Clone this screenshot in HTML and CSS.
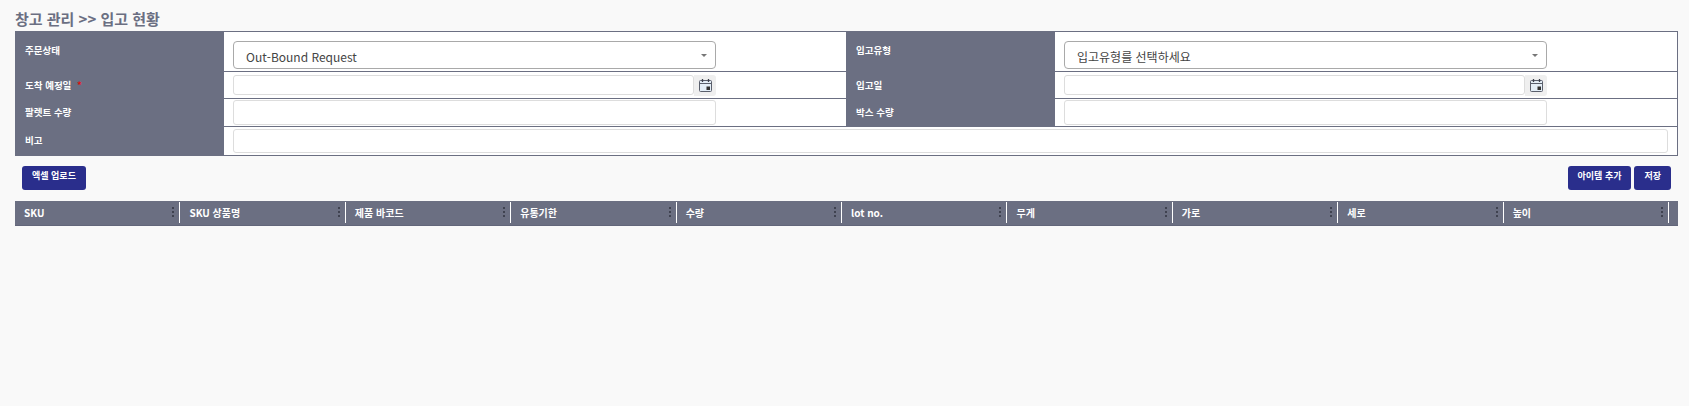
FILE: index.html
```html
<!DOCTYPE html>
<html lang="ko">
<head>
  <meta charset="UTF-8" />
  <title>입고 현황</title>
  <link rel="stylesheet" href="styles.css">
</head>
<body>
  <h1 class="page-title">창고 관리 &gt;&gt; 입고 현황</h1>

  <table class="form-table">
    <colgroup>
      <col class="col-label"><col class="col-field"><col class="col-label"><col class="col-field">
    </colgroup>
    <tr class="row-select">
      <th>주문상태</th>
      <td><div class="select"><span>Out-Bound Request</span><i class="caret"></i></div></td>
      <th>입고유형</th>
      <td><div class="select"><span>입고유형를 선택하세요</span><i class="caret"></i></div></td>
    </tr>
    <tr class="row-date">
      <th>도착 예정일 <em class="required">*</em></th>
      <td>
        <div class="date-group">
          <div class="date-input"></div>
          <div class="date-addon">
            <svg width="13" height="13" viewBox="0 0 13 13"><rect x="0.5" y="1.5" width="12" height="11" rx="1" fill="#e4eef7" stroke="#5a5f6c"/><path d="M1 4.5h11" stroke="#5a5f6c"/><path d="M3.5 0v3M9.5 0v3" stroke="#3c404c" stroke-width="1.3"/><rect x="7.5" y="7.5" width="3.5" height="3.5" fill="#333"/></svg>
          </div>
        </div>
      </td>
      <th>입고일</th>
      <td>
        <div class="date-group">
          <div class="date-input"></div>
          <div class="date-addon">
            <svg width="13" height="13" viewBox="0 0 13 13"><rect x="0.5" y="1.5" width="12" height="11" rx="1" fill="#e4eef7" stroke="#5a5f6c"/><path d="M1 4.5h11" stroke="#5a5f6c"/><path d="M3.5 0v3M9.5 0v3" stroke="#3c404c" stroke-width="1.3"/><rect x="7.5" y="7.5" width="3.5" height="3.5" fill="#333"/></svg>
          </div>
        </div>
      </td>
    </tr>
    <tr class="row-text">
      <th>팔렛트 수량</th>
      <td><div class="text-input"></div></td>
      <th>박스 수량</th>
      <td><div class="text-input"></div></td>
    </tr>
    <tr class="row-note">
      <th>비고</th>
      <td colspan="3"><div class="text-input note-input"></div></td>
    </tr>
  </table>

  <div class="toolbar">
    <button class="btn">엑셀 업로드</button>
    <div class="toolbar-right">
      <button class="btn">아이템 추가</button>
      <button class="btn">저장</button>
    </div>
  </div>

  <div class="grid-header">
    <div class="grid-cell"><span>SKU</span><i class="menu-dots"></i></div>
    <div class="grid-cell"><span>SKU 상품명</span><i class="menu-dots"></i></div>
    <div class="grid-cell"><span>제품 바코드</span><i class="menu-dots"></i></div>
    <div class="grid-cell"><span>유통기한</span><i class="menu-dots"></i></div>
    <div class="grid-cell"><span>수량</span><i class="menu-dots"></i></div>
    <div class="grid-cell"><span>lot no.</span><i class="menu-dots"></i></div>
    <div class="grid-cell"><span>무게</span><i class="menu-dots"></i></div>
    <div class="grid-cell"><span>가로</span><i class="menu-dots"></i></div>
    <div class="grid-cell"><span>세로</span><i class="menu-dots"></i></div>
    <div class="grid-cell"><span>높이</span><i class="menu-dots"></i></div>
  </div>
</body>
</html>
```

FILE: styles.css
```css
* {
  box-sizing: border-box;
}

html, body {
  height: 100%;
}

body {
  margin: 0;
  padding: 10px 11px 0 15px;
  background: #f9f9f9;
  font-family: "Noto Sans CJK KR", "Noto Sans", sans-serif;
  overflow: hidden;
}

.page-title {
  margin: 0;
  height: 21px;
  font-size: 15px;
  line-height: 18px;
  font-weight: 700;
  color: #6b6f82;
}

/* form table */
.form-table {
  width: 100%;
  border-collapse: collapse;
  table-layout: fixed;
  background: #fff;
}

.col-label {
  width: 208px;
}

.form-table th,
.form-table td {
  border: 1px solid #6b6f82;
  padding: 0;
}

.form-table th {
  background: #6b6f82;
  color: #fff;
  font-size: 9.5px;
  font-weight: 700;
  text-align: left;
  padding-left: 9px;
  vertical-align: middle;
}

.form-table td {
  padding-left: 9px;
}

.row-select { height: 40px; }
.row-date { height: 27px; }
.row-text { height: 28px; }
.row-note { height: 29px; }

.row-select th {
  padding-bottom: 3px;
}

.row-text th,
.row-note th {
  padding-bottom: 2px;
}

.select {
  display: flex;
  align-items: center;
  justify-content: space-between;
  width: 483px;
  height: 28px;
  margin-top: 7px;
  padding: 3px 8px 0 12px;
  background: #fff;
  border: 1px solid #a9a9a9;
  border-radius: 4px;
  font-size: 12px;
  color: #444;
}

.caret {
  width: 0;
  height: 0;
  border-left: 3px solid transparent;
  border-right: 3px solid transparent;
  border-top: 3px solid #777;
  margin-top: -3px;
}

.date-group {
  display: flex;
  width: 483px;
  height: 21px;
}

.date-input {
  flex: 1;
  height: 20px;
  background: #fff;
  border: 1px solid #ddd;
  border-radius: 3px;
}

.date-addon {
  display: flex;
  align-items: center;
  justify-content: center;
  width: 22px;
  background: #efefef;
  border-radius: 0 3px 3px 0;
}

.text-input {
  width: 483px;
  height: 25px;
  background: #fff;
  border: 1px solid #ddd;
  border-radius: 3px;
}

.note-input {
  width: 1435px;
  height: 24px;
}

/* buttons */
.toolbar {
  display: flex;
  justify-content: space-between;
  padding: 10px 7px 0 7px;
}

.toolbar-right {
  display: flex;
  gap: 3px;
}

.btn {
  height: 24px;
  padding: 0 10px 5px;
  background: #2a2e8c;
  border: none;
  border-radius: 3px;
  color: #fff;
  font-family: inherit;
  font-size: 9px;
  font-weight: 700;
  white-space: nowrap;
}

/* grid header */
.grid-header {
  display: flex;
  height: 25px;
  margin-top: 11px;
  padding: 1px 9px 2px 0;
  background: #6b6f82;
  border-bottom: 1px solid #62667a;
}

.grid-cell {
  flex: 1;
  display: flex;
  align-items: center;
  justify-content: space-between;
  padding: 0 5px 0 9px;
  border-right: 1px solid #fff;
  color: #fff;
  font-size: 10px;
  font-weight: 700;
}

.menu-dots {
  width: 2px;
  height: 2px;
  margin-top: -2px;
  background: #3f4250;
  box-shadow: 0 -4px 0 #3f4250, 0 4px 0 #3f4250;
}

.required {
  color: #e01010;
  font-style: normal;
  margin-left: 3px;
}
```
